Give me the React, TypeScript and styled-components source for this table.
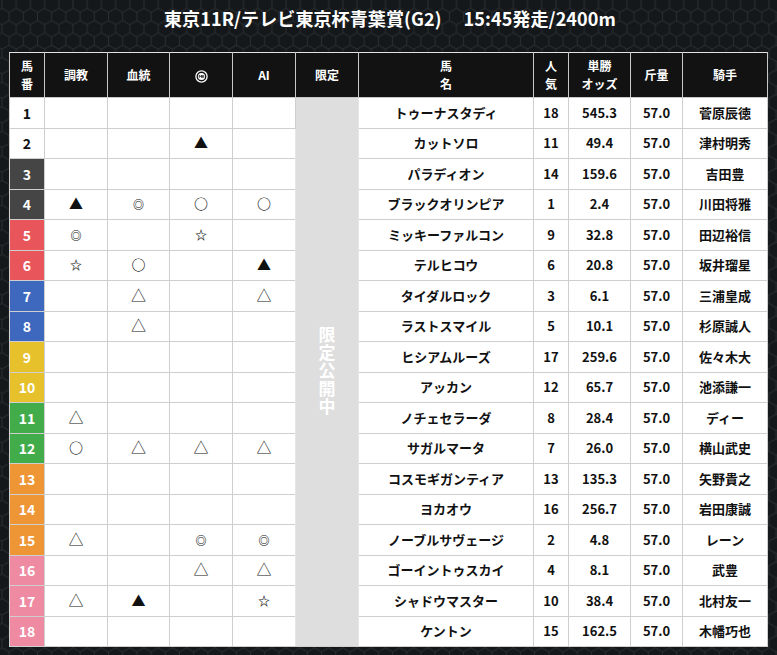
import React from 'react';
import styled, { createGlobalStyle } from 'styled-components';

const BG = '#15181a';
const HEAD_BG = '#121212';
const LINE = '#cfcfcf';

const GlobalStyle = createGlobalStyle`
    html, body {
        margin: 0;
        padding: 0;
        background: ${BG};
    }
    body {
        font-family: "Noto Sans CJK JP", "Noto Sans", sans-serif;
    }
`;

const GATE_COLORS: Record<number, { bg: string; fg: string }> = {
    1: { bg: '#ffffff', fg: '#111111' },
    2: { bg: '#ffffff', fg: '#111111' },
    3: { bg: '#454545', fg: '#ffffff' },
    4: { bg: '#454545', fg: '#ffffff' },
    5: { bg: '#e8555b', fg: '#ffffff' },
    6: { bg: '#e8555b', fg: '#ffffff' },
    7: { bg: '#3e68be', fg: '#ffffff' },
    8: { bg: '#3e68be', fg: '#ffffff' },
    9: { bg: '#e6c12b', fg: '#ffffff' },
    10: { bg: '#e6c12b', fg: '#ffffff' },
    11: { bg: '#42ac4b', fg: '#ffffff' },
    12: { bg: '#42ac4b', fg: '#ffffff' },
    13: { bg: '#ee9535', fg: '#ffffff' },
    14: { bg: '#ee9535', fg: '#ffffff' },
    15: { bg: '#ee9535', fg: '#ffffff' },
    16: { bg: '#ee8aa1', fg: '#ffffff' },
    17: { bg: '#ee8aa1', fg: '#ffffff' },
    18: { bg: '#ee8aa1', fg: '#ffffff' },
};

const Page = styled.div`
    position: relative;
    width: 777px;
    height: 655px;
    overflow: hidden;
    background: ${BG};
`;

const HexLayer = styled.svg`
    position: absolute;
    inset: 0;
    z-index: 0;
`;

const Content = styled.div`
    position: relative;
    z-index: 1;
    display: flex;
    flex-direction: column;
    padding: 0 10px 0 9px;
`;

const Title = styled.h1`
    margin: 0;
    height: 52px;
    display: flex;
    align-items: center;
    justify-content: center;
    gap: 22px;
    padding: 0 0 16px 4px;
    box-sizing: border-box;
    color: #ffffff;
    font-size: 18px;
    font-weight: 700;
    letter-spacing: 0.1px;
`;

const Table = styled.table`
    width: 758px;
    border-collapse: collapse;
    table-layout: fixed;
    border: 1px solid #e2e2e2;
`;

const HeadCell = styled.th`
    height: 44px;
    padding: 0;
    background: ${HEAD_BG};
    color: #ffffff;
    font-size: 12px;
    font-weight: 700;
    line-height: 18px;
    text-align: center;
    border: 1px solid #c8c8c8;
    border-top-color: #e2e2e2;
`;

const Row = styled.tr`
    height: 30.5px;
`;

const Cell = styled.td`
    padding: 0;
    height: 29px;
    background: #ffffff;
    color: #111111;
    font-size: 13px;
    font-weight: 700;
    line-height: 18px;
    text-align: center;
    white-space: nowrap;
    border: 1px solid ${LINE};
`;

const GateCell = styled(Cell)<{ $gate: number }>`
    background: ${(p) => GATE_COLORS[p.$gate].bg};
    color: ${(p) => GATE_COLORS[p.$gate].fg};
    font-size: 14px;
`;

const LimitedCell = styled.td`
    padding: 0;
    background: #dedede;
    border: 1px solid ${LINE};
    border-left: 1px solid #e6e6e6;
    border-right: 1px solid #e6e6e6;
    text-align: center;
    vertical-align: middle;
`;

const LimitedText = styled.span`
    display: inline-block;
    writing-mode: vertical-rl;
    color: #ffffff;
    font-size: 17px;
    font-weight: 700;
    letter-spacing: 1px;
    margin-top: 2px;
`;

const Mark = styled.span<{ $size: number; $weight?: number }>`
    display: inline-block;
    font-size: ${(p) => p.$size}px;
    font-weight: ${(p) => p.$weight ?? 400};
    line-height: 1;
    color: #111111;
`;

const MARK_STYLE: Record<string, { size: number; weight?: number }> = {
    '▲': { size: 14 },
    '△': { size: 15 },
    '○': { size: 14, weight: 700 },
    '◎': { size: 11, weight: 900 },
    '☆': { size: 12, weight: 900 },
};

function MarkGlyph({ mark }: { mark: string }) {
    if (!mark) return null;
    const s = MARK_STYLE[mark];
    return (
        <Mark $size={s.size} $weight={s.weight}>
            {mark}
        </Mark>
    );
}

function HexPattern() {
    const r = 8.2;
    const w = Math.sqrt(3) * r;
    const d = `M${w / 2},0 L${w},${r / 2} L${w},${1.5 * r} L${w / 2},${2 * r} L0,${1.5 * r} L0,${r / 2} Z M${w / 2},${2 * r} L${w / 2},${3 * r}`;
    return (
        <HexLayer width="777" height="655" viewBox="0 0 777 655">
            <defs>
                <pattern id="hex" width={w} height={3 * r} patternUnits="userSpaceOnUse" x="2" y="-4">
                    <path d={d} fill="none" stroke="#2a2e31" strokeWidth="1" />
                </pattern>
            </defs>
            <rect width="777" height="655" fill="url(#hex)" />
        </HexLayer>
    );
}

function AiBadge() {
    return (
        <svg width="13" height="13" viewBox="0 0 13 13" style={{ verticalAlign: 'middle' }}>
            <circle cx="6.5" cy="6.5" r="5.6" fill="none" stroke="#ffffff" strokeWidth="1.3" />
            <circle cx="6.5" cy="6.5" r="3.6" fill="#ffffff" />
            <path d="M4.3 7.8 L4.3 5.2 L5.4 6.6 L6.5 5.2 L6.5 7.8 M7.6 5.2 L7.6 7.8 M8.7 5.2 L8.7 7.8" stroke="#121212" strokeWidth="0.8" fill="none" />
        </svg>
    );
}

interface IHorse {
    no: number;
    marks: [string, string, string, string];
    name: string;
    pop: number;
    odds: string;
    weight: string;
    jockey: string;
}

const horses: IHorse[] = [
    { no: 1, marks: ['', '', '', ''], name: 'トゥーナスタディ', pop: 18, odds: '545.3', weight: '57.0', jockey: '菅原辰徳' },
    { no: 2, marks: ['', '', '▲', ''], name: 'カットソロ', pop: 11, odds: '49.4', weight: '57.0', jockey: '津村明秀' },
    { no: 3, marks: ['', '', '', ''], name: 'パラディオン', pop: 14, odds: '159.6', weight: '57.0', jockey: '吉田豊' },
    { no: 4, marks: ['▲', '◎', '○', '○'], name: 'ブラックオリンピア', pop: 1, odds: '2.4', weight: '57.0', jockey: '川田将雅' },
    { no: 5, marks: ['◎', '', '☆', ''], name: 'ミッキーファルコン', pop: 9, odds: '32.8', weight: '57.0', jockey: '田辺裕信' },
    { no: 6, marks: ['☆', '○', '', '▲'], name: 'テルヒコウ', pop: 6, odds: '20.8', weight: '57.0', jockey: '坂井瑠星' },
    { no: 7, marks: ['', '△', '', '△'], name: 'タイダルロック', pop: 3, odds: '6.1', weight: '57.0', jockey: '三浦皇成' },
    { no: 8, marks: ['', '△', '', ''], name: 'ラストスマイル', pop: 5, odds: '10.1', weight: '57.0', jockey: '杉原誠人' },
    { no: 9, marks: ['', '', '', ''], name: 'ヒシアムルーズ', pop: 17, odds: '259.6', weight: '57.0', jockey: '佐々木大' },
    { no: 10, marks: ['', '', '', ''], name: 'アッカン', pop: 12, odds: '65.7', weight: '57.0', jockey: '池添謙一' },
    { no: 11, marks: ['△', '', '', ''], name: 'ノチェセラーダ', pop: 8, odds: '28.4', weight: '57.0', jockey: 'ディー' },
    { no: 12, marks: ['○', '△', '△', '△'], name: 'サガルマータ', pop: 7, odds: '26.0', weight: '57.0', jockey: '横山武史' },
    { no: 13, marks: ['', '', '', ''], name: 'コスモギガンティア', pop: 13, odds: '135.3', weight: '57.0', jockey: '矢野貴之' },
    { no: 14, marks: ['', '', '', ''], name: 'ヨカオウ', pop: 16, odds: '256.7', weight: '57.0', jockey: '岩田康誠' },
    { no: 15, marks: ['△', '', '◎', '◎'], name: 'ノーブルサヴェージ', pop: 2, odds: '4.8', weight: '57.0', jockey: 'レーン' },
    { no: 16, marks: ['', '', '△', '△'], name: 'ゴーイントゥスカイ', pop: 4, odds: '8.1', weight: '57.0', jockey: '武豊' },
    { no: 17, marks: ['△', '▲', '', '☆'], name: 'シャドウマスター', pop: 10, odds: '38.4', weight: '57.0', jockey: '北村友一' },
    { no: 18, marks: ['', '', '', ''], name: 'ケントン', pop: 15, odds: '162.5', weight: '57.0', jockey: '木幡巧也' },
];

const colWidths = [35, 63, 62, 63, 63, 63, 175, 35, 62, 52, 85];

export default function App() {
    return (
        <Page>
            <GlobalStyle />
            <HexPattern />
            <Content>
                <Title>
                    <span>東京11R/テレビ東京杯青葉賞(G2)</span>
                    <span>15:45発走/2400m</span>
                </Title>
                <Table>
                    <colgroup>
                        {colWidths.map((w, i) => (
                            <col key={i} style={{ width: w }} />
                        ))}
                    </colgroup>
                    <thead>
                        <tr>
                            <HeadCell>
                                馬<br />番
                            </HeadCell>
                            <HeadCell>調教</HeadCell>
                            <HeadCell>血統</HeadCell>
                            <HeadCell>
                                <AiBadge />
                            </HeadCell>
                            <HeadCell>AI</HeadCell>
                            <HeadCell>限定</HeadCell>
                            <HeadCell>
                                馬<br />名
                            </HeadCell>
                            <HeadCell>
                                人<br />気
                            </HeadCell>
                            <HeadCell>
                                単勝<br />オッズ
                            </HeadCell>
                            <HeadCell>斤量</HeadCell>
                            <HeadCell>騎手</HeadCell>
                        </tr>
                    </thead>
                    <tbody>
                        {horses.map((h, i) => (
                            <Row key={h.no}>
                                <GateCell $gate={h.no}>{h.no}</GateCell>
                                {h.marks.map((m, j) => (
                                    <Cell key={j}>
                                        <MarkGlyph mark={m} />
                                    </Cell>
                                ))}
                                {i === 0 && (
                                    <LimitedCell rowSpan={horses.length}>
                                        <LimitedText>限定公開中</LimitedText>
                                    </LimitedCell>
                                )}
                                <Cell>{h.name}</Cell>
                                <Cell>{h.pop}</Cell>
                                <Cell>{h.odds}</Cell>
                                <Cell>{h.weight}</Cell>
                                <Cell>{h.jockey}</Cell>
                            </Row>
                        ))}
                    </tbody>
                </Table>
            </Content>
        </Page>
    );
}
